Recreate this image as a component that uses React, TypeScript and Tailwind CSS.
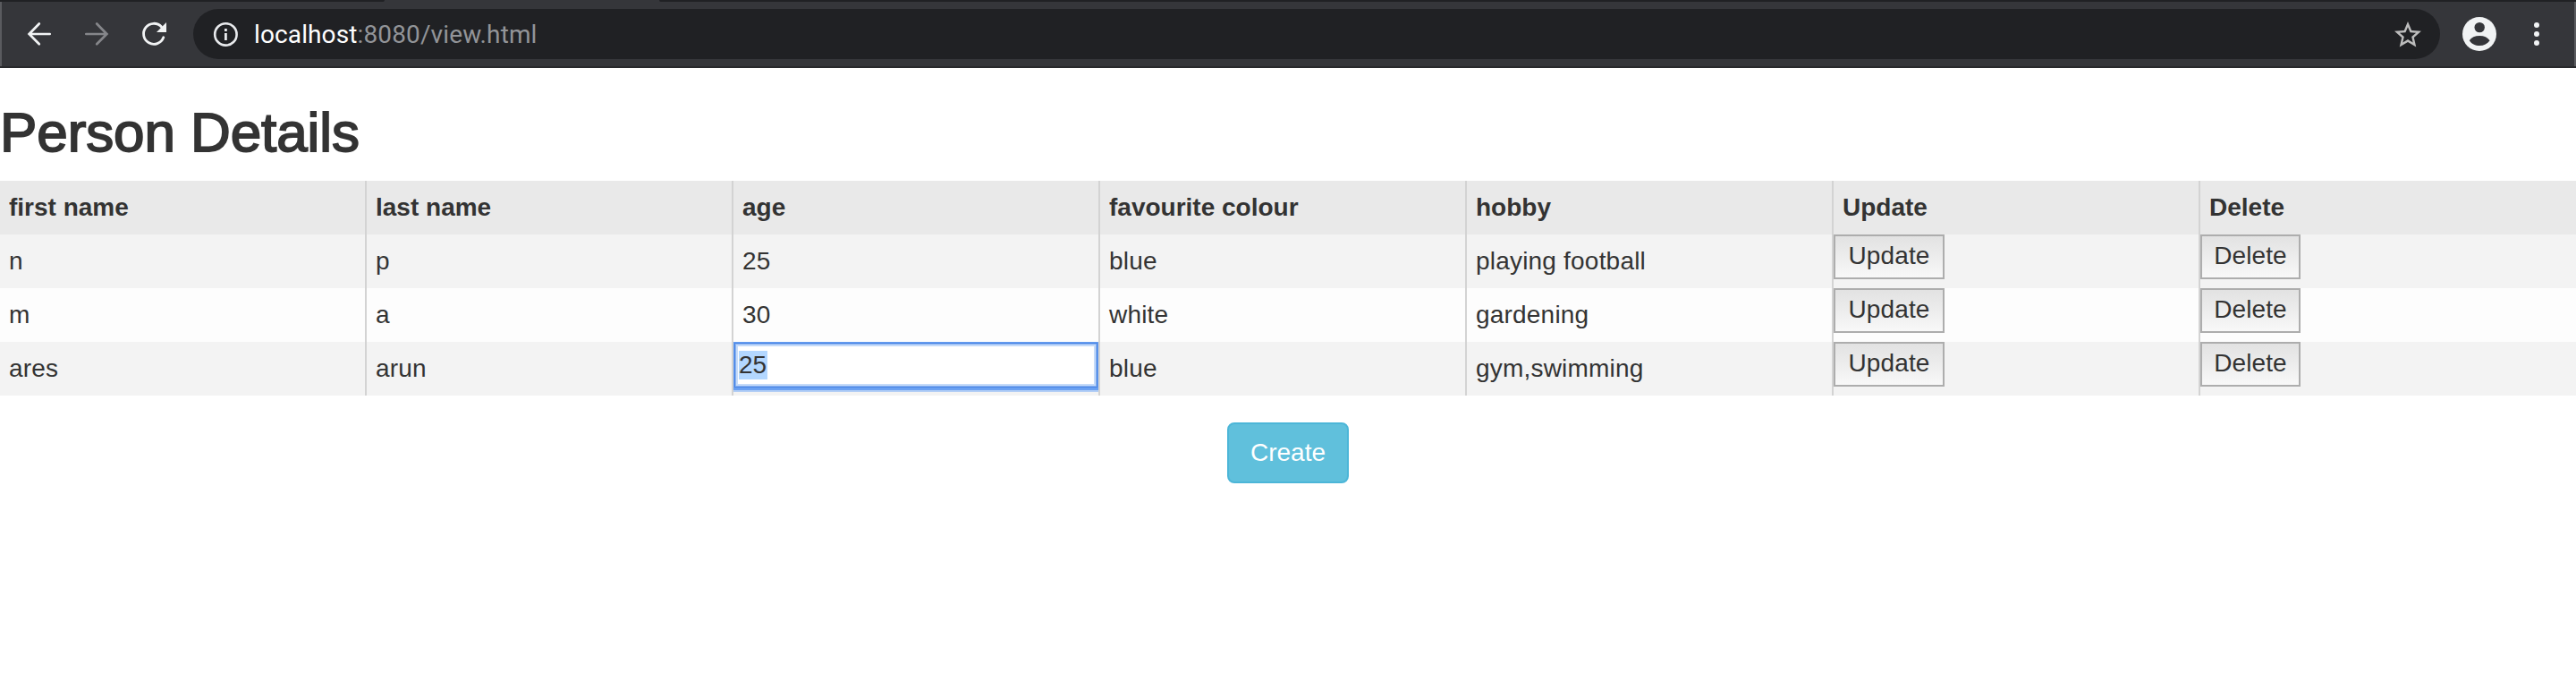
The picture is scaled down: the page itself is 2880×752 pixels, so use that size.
import React from "react";

const columns = ["first name", "last name", "age", "favourite colour", "hobby"];

const people = [
  ["n", "p", "25", "blue", "playing football"],
  ["m", "a", "30", "white", "gardening"],
  ["ares", "arun", "25", "blue", "gym,swimming"],
];

const editing = { row: 2, col: 2 };

function Toolbar() {
  return (
    <header className="flex h-[76px] flex-col border-b-2 border-[#28292c] bg-[#35363a]">
      <div className="flex h-[2px] w-full shrink-0 justify-between">
        <div className="w-[430px] rounded-br-[2px] bg-[#202124]" />
        <div className="w-[2143px] rounded-bl-[2px] bg-[#202124]" />
      </div>
      <div className="flex h-[72px] items-center border-x-2 border-[#5a5b5f] pr-[39px] pl-[26px]">
        <svg className="h-8 w-8 text-[#f1f3f4]" viewBox="0 0 32 32" fill="none" stroke="currentColor" strokeWidth="2.7" strokeLinecap="round">
          <path d="M27.7 16H5M15.8 4.5L4.6 16L15.8 27.2" />
        </svg>
        <svg className="ml-8 h-8 w-8 text-[#85868a]" viewBox="0 0 32 32" fill="none" stroke="currentColor" strokeWidth="2.7" strokeLinecap="round">
          <path d="M4.3 16H27M16.2 4.5L27.4 16L16.2 27.2" />
        </svg>
        <svg className="ml-8 h-8 w-8 text-[#f1f3f4]" viewBox="0 0 32 32" fill="none">
          <path d="M24.5 8A11.5 11.5 0 1 0 26.8 19.8" stroke="currentColor" strokeWidth="2.8" strokeLinecap="round" />
          <path d="M30 3V14H19Z" fill="currentColor" />
        </svg>
        <div className="ml-[28px] flex h-14 flex-1 items-center rounded-full bg-[#202124] pr-[18px] pl-[22px]">
          <svg className="h-7 w-7 text-[#e8eaed]" viewBox="0 0 28 28" fill="none" stroke="currentColor">
            <circle cx="14.4" cy="14.4" r="12.2" strokeWidth="2.6" />
            <path d="M14.4 13V21M14.4 8V11" strokeWidth="2.8" />
          </svg>
          <div className="ml-[18px] flex-1 pt-px font-['Roboto',sans-serif] text-[28px] leading-none tracking-[0.12px] text-[#929498]">
            <span className="text-white">localhost</span>:8080/view.html
          </div>
          <svg className="mt-[2px] h-9 w-9 text-[#bdbdbd]" viewBox="0 0 24 24" fill="currentColor">
            <path d="M22 9.24l-7.19-.62L12 2 9.19 8.63 2 9.24l5.46 4.73L5.82 21 12 17.27 18.18 21l-1.63-7.03L22 9.24zM12 15.4l-3.76 2.27 1-4.28-3.32-2.88 4.38-.38L12 6.1l1.71 4.04 4.38.38-3.32 2.88 1 4.28L12 15.4z" />
          </svg>
        </div>
        <svg className="ml-[25px] h-[38px] w-[38px]" viewBox="0 0 38 38" fill="#f1f3f4">
          <circle cx="19" cy="19" r="19" />
          <circle cx="19.2" cy="11.6" r="5.7" fill="#35363a" />
          <path d="M7.8 26.2C10 22.7 14 21 19.2 21S28 22.7 30.6 26.2C28 30 24 32 19.2 32S10 30 7.8 26.2Z" fill="#35363a" />
        </svg>
        <svg className="ml-[42px] h-[26px] w-[6px]" viewBox="0 0 6 26" fill="#f1f3f4">
          <circle cx="3" cy="3" r="3" />
          <circle cx="3" cy="13" r="3" />
          <circle cx="3" cy="23" r="3" />
        </svg>
      </div>
    </header>
  );
}

function RowButton({ label, width }: { label: string; width: string }) {
  return (
    <button
      className={`h-[50px] border-2 border-[#adadad] bg-linear-to-b from-[#e2e2e2] to-[#f8f8f8] pb-[2px] text-center leading-[44px] tracking-[0.1px] ${width}`}
    >
      {label}
    </button>
  );
}

export default function App() {
  return (
    <div className="min-h-[752px] w-[2880px] bg-white font-['Liberation_Sans',Arial,sans-serif] text-[28px] text-[#333]">
      <Toolbar />
      <h2 className="mt-[39px] h-[67px] text-[62px] leading-[66px] font-medium tracking-[-0.1px] [-webkit-text-stroke:1.8px_#333]">
        Person Details
      </h2>
      <div className="mt-[20px] grid grid-cols-[410px_410px_410px_410px_410px_410px_420px]">
        {[...columns, "Update", "Delete"].map((name, i) => (
          <div
            key={name}
            className={`h-[60px] bg-[#e9e9e9] pl-[10px] leading-[60px] font-bold ${i < 6 ? "border-r-2 border-[#d3d3d3]" : ""}`}
          >
            {name}
          </div>
        ))}
        {people.map((person, r) => (
          <React.Fragment key={r}>
            {person.map((value, c) =>
              r === editing.row && c === editing.col ? (
                <div key={c} className="h-[60px] border-r-2 border-[#d3d3d3] bg-[#f3f3f3]">
                  <div className="flex h-[52px] items-start bg-white pt-[10px] pl-[6px] shadow-[inset_0_0_0_1px_#669df0,inset_0_0_0_2px_#4a86e4,inset_0_0_0_3px_#8cb4f2,inset_0_0_0_5px_#c5dbf9,0_2px_0_#6aa0f2,0_4px_0_#b3cef5]">
                    <span className="h-8 w-8 bg-[#b3d7ff] leading-8">{value}</span>
                  </div>
                </div>
              ) : (
                <div
                  key={c}
                  className={`h-[60px] border-r-2 border-[#d3d3d3] pl-[10px] leading-[60px] tracking-[0.2px] ${r % 2 ? "bg-[#fdfdfd]" : "bg-[#f3f3f3]"}`}
                >
                  {value}
                </div>
              ),
            )}
            <div className={`flex h-[60px] items-start border-r-2 border-[#d3d3d3] ${r % 2 ? "bg-[#fdfdfd]" : "bg-[#f3f3f3]"}`}>
              <RowButton label="Update" width="w-[124px]" />
            </div>
            <div className={`flex h-[60px] items-start ${r % 2 ? "bg-[#fdfdfd]" : "bg-[#f3f3f3]"}`}>
              <RowButton label="Delete" width="w-[112px]" />
            </div>
          </React.Fragment>
        ))}
      </div>
      <div className="mt-[30px] flex justify-center">
        <button className="h-[68px] w-[136px] rounded-lg border-2 border-[#4cb6d8] bg-[#60c0dc] text-white">Create</button>
      </div>
    </div>
  );
}
